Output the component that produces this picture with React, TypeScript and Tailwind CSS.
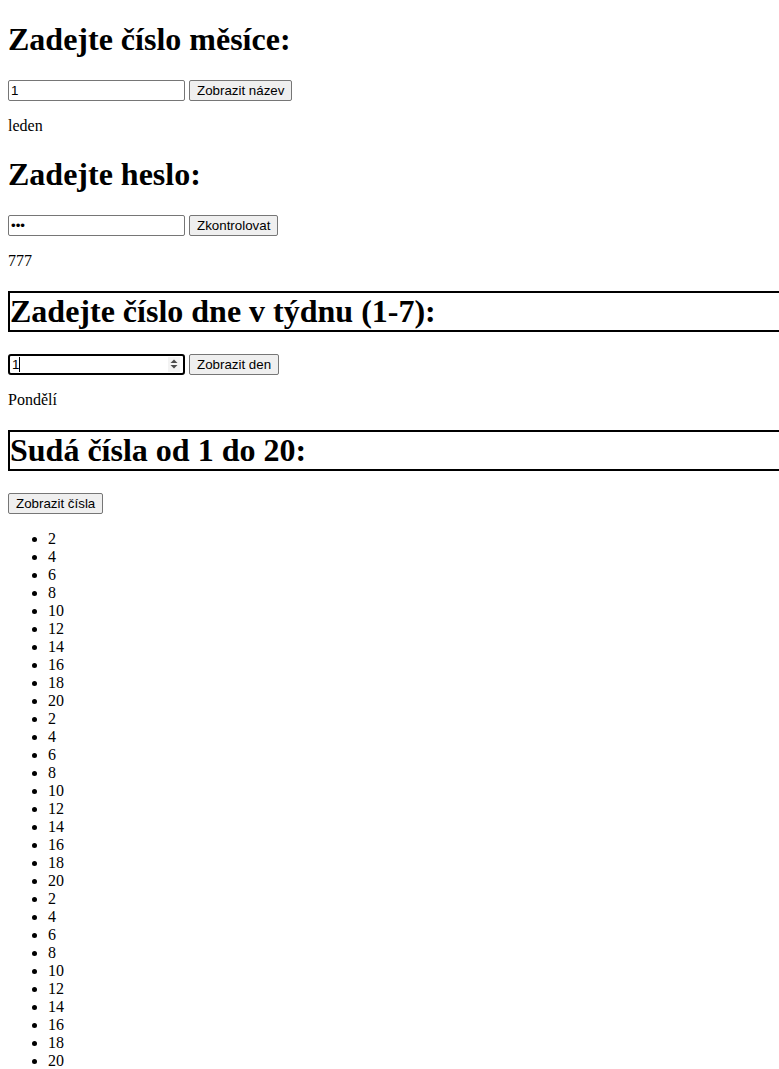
import React from 'react';

const evens = [2, 4, 6, 8, 10, 12, 14, 16, 18, 20];

const heading = "text-[32px] font-bold leading-[normal] my-[21.44px]";
const field =
  "w-[177px] h-[21px] border border-[#767676] rounded-[2px] px-[2px] py-[1px] text-[13.33px] font-['Liberation_Sans',Arial,sans-serif] text-black bg-white align-baseline";
const btn =
  "h-[21px] px-[7px] border border-[#767676] rounded-[2px] bg-[#efefef] text-[13.33px] font-['Liberation_Sans',Arial,sans-serif] text-black align-baseline";

export default function App() {
  return (
    <div className="px-2 overflow-x-clip bg-white text-black text-base leading-[normal] font-['Liberation_Serif','Times_New_Roman',serif]">
      <h1 className={heading}>Zadejte číslo měsíce:</h1>
      <div>
        <input type="text" defaultValue="1" className={field} /> <button className={btn}>Zobrazit název</button>
      </div>
      <p className="my-4">leden</p>

      <h1 className={heading}>Zadejte heslo:</h1>
      <div>
        <input type="password" defaultValue="777" className={field} /> <button className={btn}>Zkontrolovat</button>
      </div>
      <p className="my-4">777</p>

      <h1 className={`${heading} border-2 border-black mr-[-14px]`}>Zadejte číslo dne v týdnu (1-7):</h1>
      <div>
        {/* focused number field */}
        <span className="inline-flex items-center w-[177px] h-[21px] border-2 border-black rounded-[3px] pl-[2px] pr-[3px] text-[13.33px] font-['Liberation_Sans',Arial,sans-serif] align-baseline bg-white">
          <span>1</span>
          <span className="w-px h-[15px] bg-black" />
          <span className="ml-auto flex items-center justify-center w-[12px] h-[15px] bg-[#f3f3f3]">
            <svg width="8" height="12" viewBox="0 0 8 12">
              <path d="M4 1.5 L7.5 5 L0.5 5 Z" fill="#4a4a4a" />
              <path d="M4 10.5 L7.5 7 L0.5 7 Z" fill="#4a4a4a" />
            </svg>
          </span>
        </span>{' '}
        <button className={btn}>Zobrazit den</button>
      </div>
      <p className="my-4">Pondělí</p>

      <h1 className={`${heading} border-2 border-black mr-[-14px]`}>Sudá čísla od 1 do 20:</h1>
      <div>
        <button className={btn}>Zobrazit čísla</button>
      </div>
      <ul className="list-disc pl-10 my-4">
        {[0, 1, 2].map((round) =>
          evens.map((n) => <li key={`${round}-${n}`}>{n}</li>)
        )}
      </ul>
    </div>
  );
}
